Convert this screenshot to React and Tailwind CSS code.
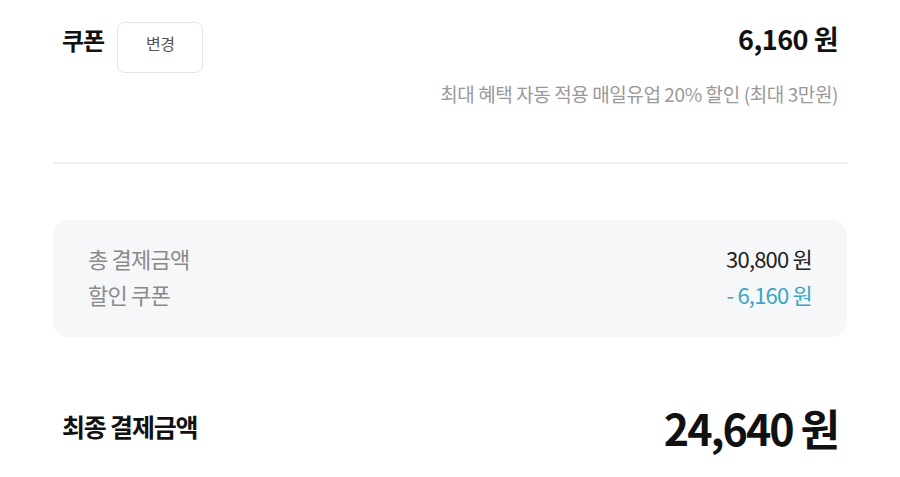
export default function App() {
  const font = { fontFamily: '"Noto Sans CJK KR", "Noto Sans", sans-serif' };
  return (
    <div style={font} className="w-[900px] h-[477px] bg-white overflow-hidden px-[53px]">
      <div className="flex justify-between pt-[22px] px-[9px]">
        <div className="flex items-start gap-[13px]">
          <span className="text-[24px] font-bold text-[#111] leading-[32px] mt-[2px] tracking-[-1px]">쿠폰</span>
          <button className="w-[86px] h-[51px] border border-[#e4e4e4] rounded-[8px] text-[16px] text-[#555] flex items-start justify-center pt-[8px] tracking-[-0.5px]">변경</button>
        </div>
        <div className="flex flex-col items-end">
          <span className="text-[27px] font-bold text-[#111] leading-[34px] tracking-[-0.5px]">6,160 원</span>
          <span className="text-[19px] text-[#999] mt-[25px] leading-[26px] tracking-[-0.4px]">최대 혜택 자동 적용 매일유업 20% 할인 (최대 3만원)</span>
        </div>
      </div>
      <div className="h-[2px] bg-[#eeeeee] mt-[55px]"></div>
      <div className="mt-[56px] bg-[#f6f7f9] rounded-[16px] h-[117px] px-[35px] pt-[21px]">
        <div className="flex justify-between text-[22px] leading-[34px] tracking-[-0.8px]">
          <span className="text-[#8a8a8a]">총 결제금액</span>
          <span className="text-[#222]">30,800 원</span>
        </div>
        <div className="flex justify-between text-[22px] leading-[34px] mt-[2px] tracking-[-0.8px]">
          <span className="text-[#8a8a8a]">할인 쿠폰</span>
          <span className="text-[#3aa6c4]">- 6,160 원</span>
        </div>
      </div>
      <div className="flex justify-between items-center mt-[62px] px-[9px]">
        <span className="text-[25px] font-bold text-[#111] tracking-[-1.2px]">최종 결제금액</span>
        <span className="text-[43px] font-bold text-[#111] leading-[56px] tracking-[-2px]">24,640 원</span>
      </div>
    </div>
  );
}
